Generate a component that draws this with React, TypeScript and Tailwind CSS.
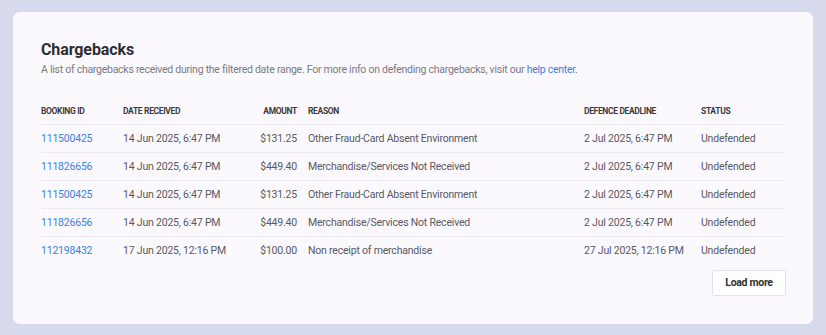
const rows = [
  { id: '111500425', received: '14 Jun 2025, 6:47 PM', amount: '$131.25', reason: 'Other Fraud-Card Absent Environment', deadline: '2 Jul 2025, 6:47 PM' },
  { id: '111826656', received: '14 Jun 2025, 6:47 PM', amount: '$449.40', reason: 'Merchandise/Services Not Received', deadline: '2 Jul 2025, 6:47 PM' },
  { id: '111500425', received: '14 Jun 2025, 6:47 PM', amount: '$131.25', reason: 'Other Fraud-Card Absent Environment', deadline: '2 Jul 2025, 6:47 PM' },
  { id: '111826656', received: '14 Jun 2025, 6:47 PM', amount: '$449.40', reason: 'Merchandise/Services Not Received', deadline: '2 Jul 2025, 6:47 PM' },
  { id: '112198432', received: '17 Jun 2025, 12:16 PM', amount: '$100.00', reason: 'Non receipt of merchandise', deadline: '27 Jul 2025, 12:16 PM' },
]

const cols = 'grid grid-cols-[82px_117px_57px_11px_276px_117px_1fr] items-center'

export default function App() {
  return (
    <div className="min-h-[335px] bg-[#d7d9ec] px-[13px] py-[12px] font-['Roboto',sans-serif]">
      <div className="rounded-[7px] bg-[#fcf9fe] px-[28px] pb-[28px] pt-[28px]">
        <h2 className="text-[16px] leading-[19px] font-bold tracking-[-0.1px] text-[#2e2e33]">Chargebacks</h2>
        <p className="mt-[4px] text-[10.5px] leading-[13px] tracking-[-0.26px] text-[#7a7a80]">
          A list of chargebacks received during the filtered date range. For more info on defending chargebacks, visit our{' '}
          <a className="text-[#3d7fe0]">help center</a>.
        </p>

        <div className="mt-[23px]">
          <div className={`${cols} h-[26px] border-b border-[#eeeaf1] text-[8.5px] font-bold uppercase tracking-[-0.35px] text-[#3a3a40]`}>
            <div>Booking ID</div>
            <div>Date received</div>
            <div className="text-right">Amount</div>
            <div />
            <div>Reason</div>
            <div>Defence deadline</div>
            <div>Status</div>
          </div>
          {rows.map((r, i) => (
            <div
              key={i}
              className={`${cols} h-[28px] text-[10.5px] tracking-[-0.2px] text-[#58585e] ${i < rows.length - 1 ? 'border-b border-[#eeeaf1]' : ''}`}
            >
              <div className="text-[#3d7fe0]">{r.id}</div>
              <div>{r.received}</div>
              <div className="text-right">{r.amount}</div>
              <div />
              <div>{r.reason}</div>
              <div>{r.deadline}</div>
              <div>Undefended</div>
            </div>
          ))}
        </div>

        <div className="mt-[5px] flex justify-end">
          <button
            type="button"
            className="mr-[-1px] h-[26px] w-[74px] rounded-[2px] border border-[#e4e1e8] bg-white text-[10.5px] font-bold tracking-[-0.3px] text-[#2e2e33]"
          >
            Load more
          </button>
        </div>
      </div>
    </div>
  )
}
